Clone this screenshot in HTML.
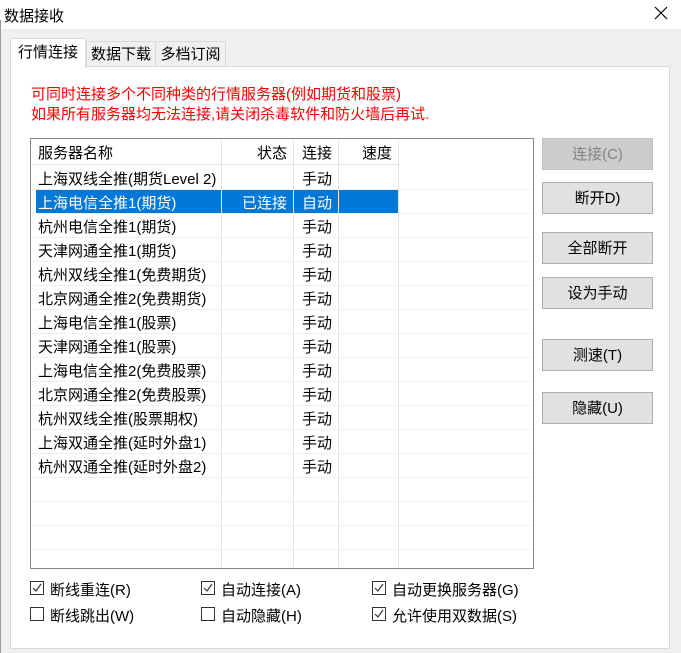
<!DOCTYPE html>
<html><head><meta charset="utf-8"><style>
*{margin:0;padding:0;box-sizing:border-box}
body{width:681px;height:653px;background:#f0f0f0;position:relative;overflow:hidden;font-family:"Liberation Sans","Microsoft YaHei","Noto Sans CJK SC",sans-serif;font-size:15px;color:#000}
.a{position:absolute;white-space:nowrap}
.btn{position:absolute;left:542px;width:111px;height:32px;background:#e1e1e1;border:1px solid #adadad;text-align:center;line-height:31px;font-size:15px}
.cb{position:absolute;width:14px;height:14px;border:1px solid #333;background:#fff}
.cb svg{position:absolute;left:1px;top:1px}
.hl{position:absolute;left:32px;width:500px;height:1px;background:#f0f0f0}
.vl{position:absolute;top:141px;width:1px;height:426px;background:#e5e5e5}
</style></head><body>
<div class="a" style="left:0;top:0;width:681px;height:29px;background:#fff"></div>
<div class="a" style="left:0;top:20px;width:1px;height:633px;background:#999"></div>
<div class="a" style="left:4px;top:5px;font-size:15px">数据接收</div>
<svg class="a" style="left:654px;top:6px" width="14" height="14"><path d="M1 1L13 13M13 1L1 13" stroke="#000" stroke-width="1.2"/></svg>
<div class="a" style="left:10px;top:66px;width:660px;height:583px;background:#fff;border:1px solid #d9d9d9"></div>
<div class="a" style="left:86px;top:41px;width:70px;height:26px;background:#f0f0f0;border:1px solid #d9d9d9;text-align:center;line-height:25px">数据下载</div>
<div class="a" style="left:155px;top:41px;width:71px;height:26px;background:#f0f0f0;border:1px solid #d9d9d9;text-align:center;line-height:25px">多档订阅</div>
<div class="a" style="left:10px;top:38px;width:76px;height:30px;background:#fff;border:1px solid #d9d9d9;border-bottom:none;text-align:center;line-height:28px">行情连接</div>
<div class="a" style="left:31px;top:85px;color:#f00;line-height:20px">可同时连接多个不同种类的行情服务器(例如期货和股票)<br>如果所有服务器均无法连接,请关闭杀毒软件和防火墙后再试.</div>
<div class="a" style="left:30px;top:138px;width:504px;height:431px;border:1px solid #828790;background:#fff"></div>
<div class="a" style="left:32px;top:141px;width:366px;height:24px;border-bottom:1px solid #e5e5e5"></div>
<div class="hl" style="top:189px"></div><div class="hl" style="top:213px"></div><div class="hl" style="top:237px"></div><div class="hl" style="top:261px"></div><div class="hl" style="top:285px"></div><div class="hl" style="top:309px"></div><div class="hl" style="top:333px"></div><div class="hl" style="top:357px"></div><div class="hl" style="top:381px"></div><div class="hl" style="top:405px"></div><div class="hl" style="top:429px"></div><div class="hl" style="top:453px"></div><div class="hl" style="top:477px"></div><div class="hl" style="top:501px"></div><div class="hl" style="top:525px"></div><div class="hl" style="top:549px"></div>
<div class="a" style="left:36px;top:190px;width:362px;height:23px;background:#0078d7"></div>
<div class="vl" style="left:221px"></div><div class="vl" style="left:293px"></div><div class="vl" style="left:338px"></div><div class="vl" style="left:398px"></div>
<div class="a" style="left:38px;top:144px;line-height:20px">服务器名称</div>
<div class="a" style="left:257px;top:144px;line-height:20px">状态</div>
<div class="a" style="left:302px;top:144px;line-height:20px">连接</div>
<div class="a" style="left:362px;top:144px;line-height:20px">速度</div>
<div class="a" style="left:38px;top:168px;line-height:24px">上海双线全推(期货Level 2)<br><span style="color:#fff">上海电信全推1(期货)</span><br>杭州电信全推1(期货)<br>天津网通全推1(期货)<br>杭州双线全推1(免费期货)<br>北京网通全推2(免费期货)<br>上海电信全推1(股票)<br>天津网通全推1(股票)<br>上海电信全推2(免费股票)<br>北京网通全推2(免费股票)<br>杭州双线全推(股票期权)<br>上海双通全推(延时外盘1)<br>杭州双通全推(延时外盘2)</div>
<div class="a" style="left:242px;top:192px;line-height:24px;color:#fff">已连接</div>
<div class="a" style="left:302px;top:168px;line-height:24px">手动<br><span style="color:#fff">自动</span><br>手动<br>手动<br>手动<br>手动<br>手动<br>手动<br>手动<br>手动<br>手动<br>手动<br>手动</div>
<div class="btn" style="top:138px;background:#ccc;border-color:#bfbfbf;color:#838383">连接(C)</div>
<div class="btn" style="top:182px">断开D)</div>
<div class="btn" style="top:232px">全部断开</div>
<div class="btn" style="top:277px">设为手动</div>
<div class="btn" style="top:339px">测速(T)</div>
<div class="btn" style="top:392px">隐藏(U)</div>
<div class="cb" style="left:30px;top:581px"><svg width="10" height="10"><path d="M1 5L4 8L9 1" stroke="#333" fill="none" stroke-width="1.2"/></svg></div>
<div class="a" style="left:50px;top:579px">断线重连(R)</div>
<div class="cb" style="left:201px;top:581px"><svg width="10" height="10"><path d="M1 5L4 8L9 1" stroke="#333" fill="none" stroke-width="1.2"/></svg></div>
<div class="a" style="left:221px;top:579px">自动连接(A)</div>
<div class="cb" style="left:372px;top:581px"><svg width="10" height="10"><path d="M1 5L4 8L9 1" stroke="#333" fill="none" stroke-width="1.2"/></svg></div>
<div class="a" style="left:392px;top:579px">自动更换服务器(G)</div>
<div class="cb" style="left:30px;top:607px"></div>
<div class="a" style="left:50px;top:605px">断线跳出(W)</div>
<div class="cb" style="left:201px;top:607px"></div>
<div class="a" style="left:221px;top:605px">自动隐藏(H)</div>
<div class="cb" style="left:372px;top:607px"><svg width="10" height="10"><path d="M1 5L4 8L9 1" stroke="#333" fill="none" stroke-width="1.2"/></svg></div>
<div class="a" style="left:392px;top:605px">允许使用双数据(S)</div>
</body></html>
